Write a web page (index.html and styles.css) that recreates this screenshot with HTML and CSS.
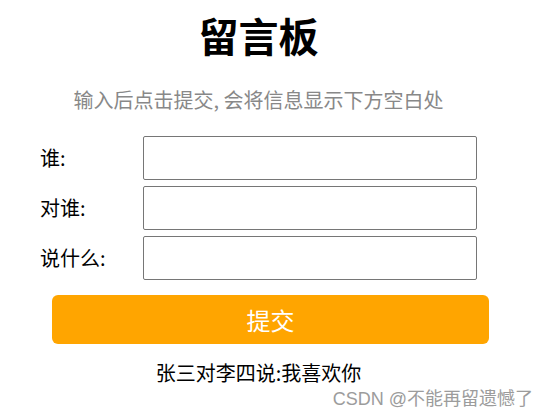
FILE: index.html
```html
<!DOCTYPE html>
<html lang="zh-CN">
<head>
  <meta charset="UTF-8">
  <meta name="viewport" content="width=device-width, initial-scale=1.0">
  <title>留言板</title>
  <link rel="stylesheet" href="styles.css">
</head>
<body>
<div class="container">
  <h1 class="title">留言板</h1>
  <p class="tip">输入后点击提交, 会将信息显示下方空白处</p>
  <div class="form-row">
    <label for="from">谁:</label>
    <input type="text" id="from">
  </div>
  <div class="form-row">
    <label for="to">对谁:</label>
    <input type="text" id="to">
  </div>
  <div class="form-row">
    <label for="msg">说什么:</label>
    <input type="text" id="msg">
  </div>
  <button class="submit" onclick="submitMsg()">提交</button>
  <div id="messages">
    <div class="message">张三对李四说:我喜欢你</div>
  </div>
</div>
<div class="watermark">CSDN @不能再留遗憾了</div>

<script>
  function submitMsg() {
    const from = document.getElementById('from').value.trim();
    const to = document.getElementById('to').value.trim();
    const msg = document.getElementById('msg').value.trim();
    if (!from || !to || !msg) return;
    const row = document.createElement('div');
    row.className = 'message';
    row.textContent = from + '对' + to + '说:' + msg;
    document.getElementById('messages').appendChild(row);
  }
</script>
</body>
</html>
```

FILE: styles.css
```css
body {
  margin: 0;
  padding: 0;
  background-color: #fff;
  font-family: "Noto Sans CJK SC", sans-serif;
  color: #000;
}
.container {
  width: 437px;
  margin-left: 40px;
  padding-top: 15px;
}
.title {
  margin: 0;
  font-size: 40px;
  line-height: 40px;
  font-weight: bold;
  text-align: center;
}
.tip {
  margin: 30px 0 21px;
  font-size: 20px;
  line-height: 30px;
  color: #888;
  text-align: center;
}
.form-row {
  display: flex;
  align-items: center;
  margin-bottom: 6px;
}
.form-row label {
  width: 103px;
  font-size: 20px;
  line-height: 30px;
}
.form-row input {
  width: 334px;
  height: 44px;
  box-sizing: border-box;
  border: 1px solid #767676;
  border-radius: 2px;
  padding: 0 6px;
  font-size: 18px;
}
.submit {
  display: block;
  width: 437px;
  height: 49px;
  margin: 15px 0 0 12px;
  border: none;
  border-radius: 6px;
  background-color: #ffa500;
  color: #fff;
  font-family: "Noto Sans CJK SC", sans-serif;
  font-size: 24px;
  cursor: pointer;
}
#messages {
  margin-top: 14px;
}
.message {
  font-size: 20px;
  line-height: 30px;
  text-align: center;
}
.watermark {
  position: absolute;
  right: 14px;
  top: 389px;
  font-family: "Liberation Sans", "Noto Sans CJK SC", sans-serif;
  font-size: 18px;
  line-height: 20px;
  color: #9c9c9c;
}
```
